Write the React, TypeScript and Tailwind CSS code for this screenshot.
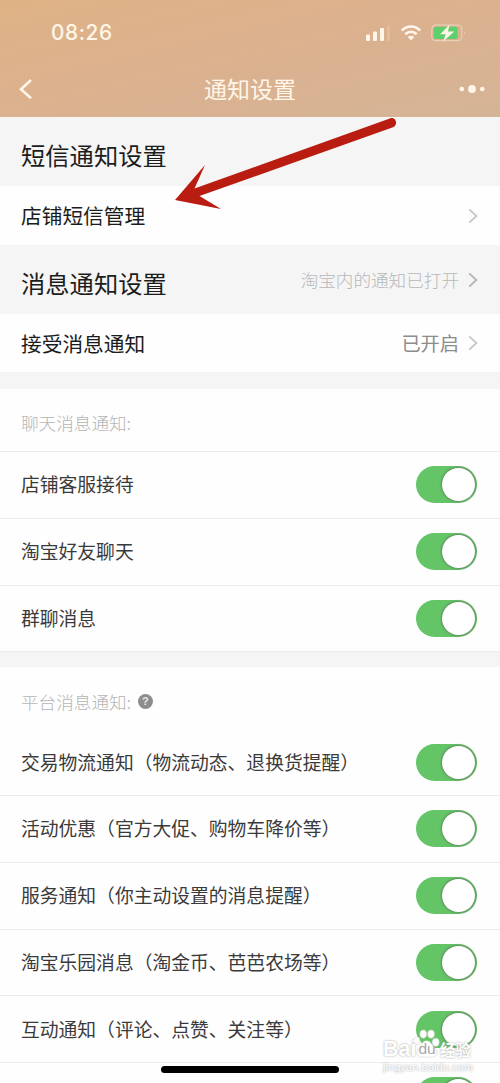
import React, { useState } from 'react';

interface NoticeItem {
  id: string;
  label: string;
}

const chatItems: NoticeItem[] = [
  { id: 'service', label: '店铺客服接待' },
  { id: 'friends', label: '淘宝好友聊天' },
  { id: 'group', label: '群聊消息' },
];

const platformItems: NoticeItem[] = [
  { id: 'logistics', label: '交易物流通知（物流动态、退换货提醒）' },
  { id: 'promotion', label: '活动优惠（官方大促、购物车降价等）' },
  { id: 'reminder', label: '服务通知（你主动设置的消息提醒）' },
  { id: 'park', label: '淘宝乐园消息（淘金币、芭芭农场等）' },
  { id: 'interaction', label: '互动通知（评论、点赞、关注等）' },
];

const Chevron: React.FC<{ className: string }> = ({ className }) => (
  <svg className={`w-[10px] h-4 shrink-0 ${className}`} viewBox="0 0 10 16" fill="none" stroke="currentColor">
    <path d="M1.2 1.4L8.4 8L1.2 14.6" strokeWidth="1.8" />
  </svg>
);

const Toggle: React.FC = () => {
  const [on, setOn] = useState(true);

  return (
    <button
      onClick={() => setOn(!on)}
      className={`flex h-[37px] w-[61px] shrink-0 items-center rounded-full px-[2px] ${
        on ? 'justify-end bg-[#63c565]' : 'justify-start bg-gray-200'
      }`}
    >
      <span className="size-[33px] rounded-full bg-white shadow-[0_0_2px_1px_rgba(100,110,100,0.65)]" />
    </button>
  );
};

const ToggleRow: React.FC<{ item: NoticeItem }> = ({ item }) => (
  <div className="flex h-[66.75px] shrink-0 items-center justify-between border-b border-[#ececec] pl-[21px] pr-[23px]">
    <span className="text-[18.8px] text-[#3a3a3a]">{item.label}</span>
    <Toggle />
  </div>
);

const StatusBar: React.FC = () => (
  <div className="flex h-[66px] items-center justify-between pl-[51px] pr-[33px]">
    <span className="pt-px font-[Inter] text-[20.8px] font-medium tracking-[0.6px]">08:26</span>
    <svg className="h-5 w-[101px]" viewBox="0 0 101 20" fill="none">
      <rect y="11.5" width="4" height="6.5" rx="1" fill="currentColor" />
      <rect x="7" y="8.5" width="4" height="9.5" rx="1" fill="currentColor" />
      <rect x="14" y="5" width="4" height="13" rx="1" fill="currentColor" />
      <rect x="21" y="2.5" width="3" height="15.5" rx="1" fill="currentColor" opacity="0.18" />
      <path d="M35.8 7.4C41.3 2.2 48.7 2.2 54.2 7.4M39.3 11.2C42.7 8 47.3 8 50.7 11.2" stroke="currentColor" strokeWidth="2.7" />
      <path d="M41.8 14Q45 11.4 48.2 14L45 17.6Z" fill="currentColor" />
      <rect x="65.8" y="2.1" width="30" height="15.6" rx="4" stroke="currentColor" strokeOpacity="0.42" strokeWidth="1.2" />
      <rect x="67.6" y="3.8" width="24" height="12.2" rx="2.5" fill="#5fce6c" />
      <path d="M98.3 8v3.8Q99.8 10 98.3 8Z" fill="currentColor" opacity="0.6" />
      <path d="M83.6 1.4L74.2 11.3H79.8L77 18.6L88.4 8.6H82Z" fill="currentColor" />
    </svg>
  </div>
);

const Watermark: React.FC = () => (
  <div className="absolute left-[383px] top-[1027px] h-[48px] w-[98px] text-white [text-shadow:0_0_2px_#999]">
    <div className="flex h-[34px] items-end whitespace-nowrap font-bold leading-none">
      <span className="w-[33px] font-['Liberation_Sans'] text-[21.5px] leading-[24px]">Bai</span>
      <span className="relative flex h-[34px] w-[22px] items-end justify-center">
        <svg className="absolute left-[-4px] top-0 h-[32px] w-[30px]" viewBox="0 0 32 34" fill="white" stroke="#d0d0d0" strokeWidth="0.6">
          <ellipse cx="12" cy="7.5" rx="3.6" ry="4.4" />
          <ellipse cx="20.3" cy="7.5" rx="3.6" ry="4.4" />
          <ellipse cx="5.2" cy="14.5" rx="3.2" ry="4.2" />
          <ellipse cx="25.3" cy="16.2" rx="3.7" ry="4.3" />
          <path d="M15.5 14.5C20 14.5 21.5 20 25 23C29 28 26 33 20 32H11C6 33 3.5 28 7 23C10 20 11 14.5 15.5 14.5Z" />
        </svg>
        <span className="relative font-['Liberation_Sans'] text-[15.5px] font-normal leading-[25px] text-[#a8a8a8] [text-shadow:none]">du</span>
      </span>
      <span className="ml-[2px] text-[15.5px] leading-[24px]">经验</span>
    </div>
    <div className="font-['Liberation_Sans'] text-[11.2px] leading-[13px]">jingyan.baidu.com</div>
  </div>
);

const App: React.FC = () => {
  return (
    <div className="relative flex h-[1083px] w-[500px] flex-col overflow-hidden bg-[#fefefe] font-['Noto_Sans_CJK_SC',sans-serif] leading-none">
      <header className="h-[117px] shrink-0 bg-linear-to-br from-[#dfb285] via-[#dbb18f] to-[#d4b496] text-[#fff6e9]">
        <StatusBar />
        <div className="flex h-[45px] items-center justify-between pl-[19px] pr-[15px]">
          <svg className="mr-[-6px] h-5 w-7" viewBox="0 0 28 20" fill="none" stroke="currentColor" strokeWidth="2.6">
            <path d="M12 1L2 10.2L12 19.2" />
          </svg>
          <h1 className="text-[23px]">通知设置</h1>
          <svg className="h-2 w-[26px]" viewBox="0 0 26 8" fill="currentColor">
            <circle cx="2.8" cy="4" r="2.3" />
            <circle cx="13" cy="4" r="3.9" />
            <circle cx="23.3" cy="4" r="2.3" />
          </svg>
        </div>
      </header>

      {/* SMS settings */}
      <div className="flex h-[69px] shrink-0 items-center bg-[#f5f5f5] px-[21px] pt-[7px] text-[#1c1c1c]">
        <h2 className="text-[24.3px]">短信通知设置</h2>
      </div>
      <div className="flex h-[59px] shrink-0 items-center justify-between pl-[21px] pr-[22px] text-[#1c1c1c]">
        <span className="text-[20.7px]">店铺短信管理</span>
        <Chevron className="text-[#c7c7c7]" />
      </div>

      {/* Message settings */}
      <div className="flex h-[69px] shrink-0 items-center justify-between bg-[#f5f5f5] pl-[21px] pr-[22px] text-[#1c1c1c]">
        <h2 className="pt-[8px] text-[24.3px]">消息通知设置</h2>
        <div className="flex items-center gap-[9px] pt-px text-[17.6px] font-light text-[#b8b8b8]">
          <span className="pb-px">淘宝内的通知已打开</span>
          <Chevron className="text-[#b4b4b4]" />
        </div>
      </div>
      <div className="flex h-[58px] shrink-0 items-center justify-between pl-[21px] pr-[22px] text-[#1c1c1c]">
        <span className="text-[20.7px]">接受消息通知</span>
        <div className="flex items-center gap-[9px] pt-px text-[19.2px] text-[#8c8c8c]">
          <span>已开启</span>
          <Chevron className="text-[#c7c7c7]" />
        </div>
      </div>
      <div className="h-[17px] shrink-0 bg-[#f5f5f5]" />

      {/* Chat notifications */}
      <div className="flex h-[63px] shrink-0 items-center border-b border-[#ececec] px-[21px] pt-[6px] text-[17.6px] font-light text-[#b5b5b5]">
        聊天消息通知:
      </div>
      {chatItems.map((item) => (
        <ToggleRow key={item.id} item={item} />
      ))}
      <div className="h-[15px] shrink-0 bg-[#f5f5f5]" />

      {/* Platform notifications */}
      <div className="flex h-[62px] shrink-0 items-center gap-[7px] px-[21px] pt-[7px] text-[17.6px] font-light text-[#b5b5b5]">
        平台消息通知:
        <span className="flex size-[15px] items-center justify-center rounded-full bg-[#8d8d8d] font-['Liberation_Sans'] text-[11px] font-bold text-[#e8e8e8]">
          ?
        </span>
      </div>
      {platformItems.map((item) => (
        <ToggleRow key={item.id} item={item} />
      ))}
      <div className="flex shrink-0 justify-end pr-[23px] pt-[14px]">
        <Toggle />
      </div>

      {/* Pointer arrow */}
      <svg className="pointer-events-none absolute left-[170px] top-[112px] h-[102px] w-[232px]" viewBox="170 112 232 102">
        <path
          d="M175 200L205 165L194.5 188.5L389.8 118.4C396 116.4 398.6 125 393 127.3L199.5 196L221 209Z"
          fill="#b91c10"
        />
      </svg>

      <Watermark />
      <div className="absolute left-[161px] top-[1066px] h-[7px] w-[178px] rounded-full bg-black" />
    </div>
  );
};

export default App;
